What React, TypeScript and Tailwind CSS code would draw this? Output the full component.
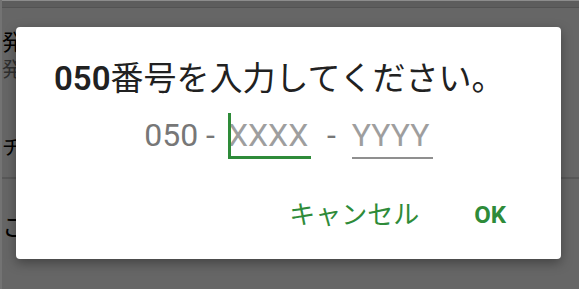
import React from 'react';

const jp = "font-['Roboto','Noto_Sans_CJK_JP',sans-serif]";

// Only the sliver left of the dialog is visible, so only the first glyph of each row is drawn
const BackgroundList: React.FC = () => (
    <div className={`absolute inset-0 bg-white ${jp}`}>
        <div className="h-[8px] bg-[#e8e8e8] border-b border-[#cfcfcf]" />
        <div className="pl-[2px] pt-[21px] text-[22px] leading-[28px] text-black">発</div>
        <div className="pl-[2px] text-[20px] leading-[26px] text-[#777]">発</div>
        <div className="pl-[2px] pt-[54px] text-[20px] leading-[22px] text-black">チ</div>
        <div className="mt-[18px] h-[2px] bg-[#dcdcdc]" />
        <div className="pl-[2px] pt-[36px] text-[24px] leading-[26px] text-black">こ</div>
        <div className="pl-[75px] pt-[46px] text-[14px] leading-[16px] text-[#555]">9 1 1</div>
    </div>
);

const App: React.FC = () => {
    return (
        <div className="relative w-[579px] h-[289px] overflow-hidden">
            <BackgroundList />
            {/* scrim */}
            <div className="absolute inset-0 bg-black/60" />
            <div className="absolute top-0 left-0 right-0 h-px bg-[#8c8c8c]" />
            <div className="absolute top-0 bottom-0 left-0 w-[2px] bg-[#737373]" />

            {/* dialog */}
            <div className={`absolute left-[16px] top-[27px] w-[545px] h-[232px] bg-white rounded-[4px] shadow-[0_4px_12px_rgba(0,0,0,0.35)] flex flex-col ${jp}`}>
                <h1 className="pl-[38px] pt-[32px] text-[33px] leading-[40px] text-[#212121] whitespace-nowrap">
                    <span className="font-semibold">050</span>番号を入力してください。
                </h1>
                <div className="mt-[16px] flex items-end justify-center text-[32px] leading-[40px] font-['Roboto',sans-serif]">
                    <span className="text-[#777] mr-[13px] pb-[4px]">050 -</span>
                    <div className="relative w-[83px] border-b-[3px] border-[#2e8b39] pb-[1px]">
                        <span className="absolute left-0 top-[-2px] w-[3px] h-[44px] bg-[#2e8b39]" />
                        <span className="text-[#9e9e9e]">XXXX</span>
                    </div>
                    <span className="text-[#777] mx-[16px] pb-[4px]">-</span>
                    <div className="w-[81px] border-b-[2px] border-[#8f8f8f] pb-[2px]">
                        <span className="text-[#9e9e9e]">YYYY</span>
                    </div>
                </div>
                <div className="mt-auto mb-[29px] flex justify-end items-center pr-[55px] gap-[55px] text-[#2e8b39]">
                    <button className="text-[26px] leading-[30px]">キャンセル</button>
                    <button className="text-[24px] leading-[30px] font-bold">OK</button>
                </div>
            </div>
        </div>
    );
};

export default App;
